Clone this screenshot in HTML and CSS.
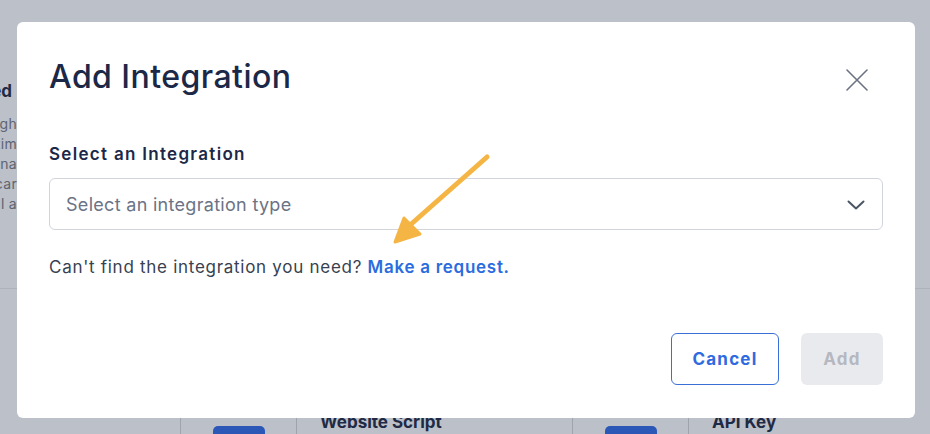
FILE: index.html
```html
<!DOCTYPE html>
<html lang="en">
<head>
<meta charset="utf-8">
<title>Add Integration</title>
<link rel="stylesheet" href="styles.css">
</head>
<body>
<div class="page">
  <div class="intro">
    <div class="intro-clip">
      <h2 class="intro-title">Connected</h2>
      <div class="intro-body">
        <div class="intro-line">through</div>
        <div class="intro-line">tim</div>
        <div class="intro-line">na</div>
        <div class="intro-line">car</div>
        <div class="intro-line">il a</div>
      </div>
    </div>
  </div>
  <div class="cards">
    <div class="card">
      <div class="card-icon"><span class="icon-box"></span></div>
      <div class="card-text">Website Script</div>
    </div>
    <div class="card">
      <div class="card-icon"><span class="icon-box"></span></div>
      <div class="card-text">API Key</div>
    </div>
  </div>
</div>

<div class="modal" role="dialog" aria-labelledby="modal-title">
  <div class="modal-header">
    <h1 id="modal-title" class="modal-title">Add Integration</h1>
    <button class="close-btn" aria-label="Close">
      <svg width="22" height="22" viewBox="0 0 22 22" fill="none" stroke="#6b7280" stroke-width="1.6" stroke-linecap="round"><path d="M1 1L21 21M21 1L1 21"/></svg>
    </button>
  </div>
  <label class="field-label" for="sel">Select an Integration</label>
  <div class="select" id="sel">
    <span class="placeholder">Select an integration type</span>
    <svg class="chevron" width="18" height="10" viewBox="0 0 18 10" fill="none" stroke="#4b5563" stroke-width="2" stroke-linecap="round" stroke-linejoin="round"><path d="M1.5 1.5L9 8.5L16.5 1.5"/></svg>
  </div>
  <p class="help">Can't find the integration you need? <a class="link" href="#">Make a request.</a></p>
  <div class="actions">
    <button class="btn btn-outline">Cancel</button>
    <button class="btn btn-disabled" disabled>Add</button>
  </div>
  <svg class="arrow" width="110" height="100" viewBox="0 0 110 100" fill="none">
    <path d="M105 5L27 74" stroke="#f5b544" stroke-width="5" stroke-linecap="round"/>
    <path d="M13 90L22 66L38 82Z" fill="#f5b544" stroke="#f5b544" stroke-width="3" stroke-linejoin="round"/>
  </svg>
</div>
</body>
</html>
```

FILE: styles.css
```css
* { box-sizing: border-box; }

html, body {
  margin: 0;
  padding: 0;
  height: 100%;
}

body {
  background: #bcc0c8;
  font-family: Inter, "Noto Sans", "Liberation Sans", sans-serif;
  overflow: hidden;
}

.page {
  width: 930px;
  height: 434px;
  overflow: hidden;
}

.intro {
  height: 289px;
  border-bottom: 1px solid #aeb2ba;
  padding-top: 78px;
}

.intro-clip {
  width: 17px;
  overflow: hidden;
  display: flex;
  flex-direction: column;
  align-items: flex-end;
}

.intro-title {
  margin: 0 5px 0 0;
  font-size: 17px;
  line-height: 26px;
  font-weight: 700;
  color: #1f2a44;
  white-space: nowrap;
}

.intro-body {
  margin-top: 10px;
  display: flex;
  flex-direction: column;
  align-items: flex-end;
}

.intro-line {
  font-size: 14px;
  line-height: 20px;
  color: #5d6472;
  white-space: nowrap;
  letter-spacing: 0.3px;
}

.cards {
  display: flex;
  padding-left: 180px;
  height: 145px;
}

.card {
  flex-shrink: 0;
  display: flex;
  width: 392px;
  border-left: 1px solid #9ea3ac;
}

.card-icon {
  width: 116px;
  border-right: 1px solid #9ea3ac;
  display: flex;
  justify-content: center;
  padding-top: 137px;
}

.icon-box {
  display: block;
  width: 52px;
  height: 40px;
  background: #2b57b6;
  border-radius: 5px;
}

.card-text {
  padding: 121px 0 0 23px;
  font-size: 17px;
  line-height: 24px;
  font-weight: 700;
  color: #1f2a44;
}

.modal {
  position: absolute;
  left: 17px;
  top: 22px;
  width: 898px;
  height: 396px;
  background: #ffffff;
  border-radius: 6px;
  padding: 32px 32px 33px 32px;
  display: flex;
  flex-direction: column;
}

.modal-header {
  display: flex;
  justify-content: space-between;
  align-items: center;
  height: 46px;
}

.modal-title {
  margin: 0;
  font-size: 32px;
  line-height: 46px;
  font-weight: 500;
  color: #1b2848;
  letter-spacing: 0.45px;
}

.close-btn {
  background: none;
  border: 0;
  padding: 0;
  margin: 6px 15px 0 0;
  width: 22px;
  height: 22px;
  display: flex;
  cursor: pointer;
}

.field-label {
  margin-top: 42px;
  font-size: 17px;
  line-height: 24px;
  font-weight: 600;
  color: #1b2848;
  letter-spacing: 1.3px;
}

.select {
  margin-top: 12px;
  height: 52px;
  border: 1px solid #d1d5db;
  border-radius: 6px;
  display: flex;
  align-items: center;
  justify-content: space-between;
  padding: 0 17px 0 16px;
}

.placeholder {
  font-size: 18px;
  color: #6b7385;
  letter-spacing: 0.3px;
}

.chevron {
  margin-top: 2px;
}

.help {
  margin: 25px 0 0 0;
  font-size: 17px;
  line-height: 24px;
  color: #374151;
  letter-spacing: 0.72px;
}

.link {
  color: #2b6cde;
  font-weight: 600;
  text-decoration: none;
}

.actions {
  margin-top: auto;
  display: flex;
  justify-content: flex-end;
  gap: 22px;
}

.btn {
  height: 52px;
  border-radius: 6px;
  font-family: inherit;
  font-size: 17px;
  font-weight: 700;
  letter-spacing: 1.2px;
  padding: 0;
}

.btn-outline {
  width: 108px;
  background: #ffffff;
  border: 1px solid #3a6fd8;
  color: #2f6ae0;
}

.btn-disabled {
  width: 82px;
  background: #e9eaee;
  border: 0;
  color: #b5b8c0;
}

.arrow {
  position: absolute;
  left: 365px;
  top: 130px;
}
```
